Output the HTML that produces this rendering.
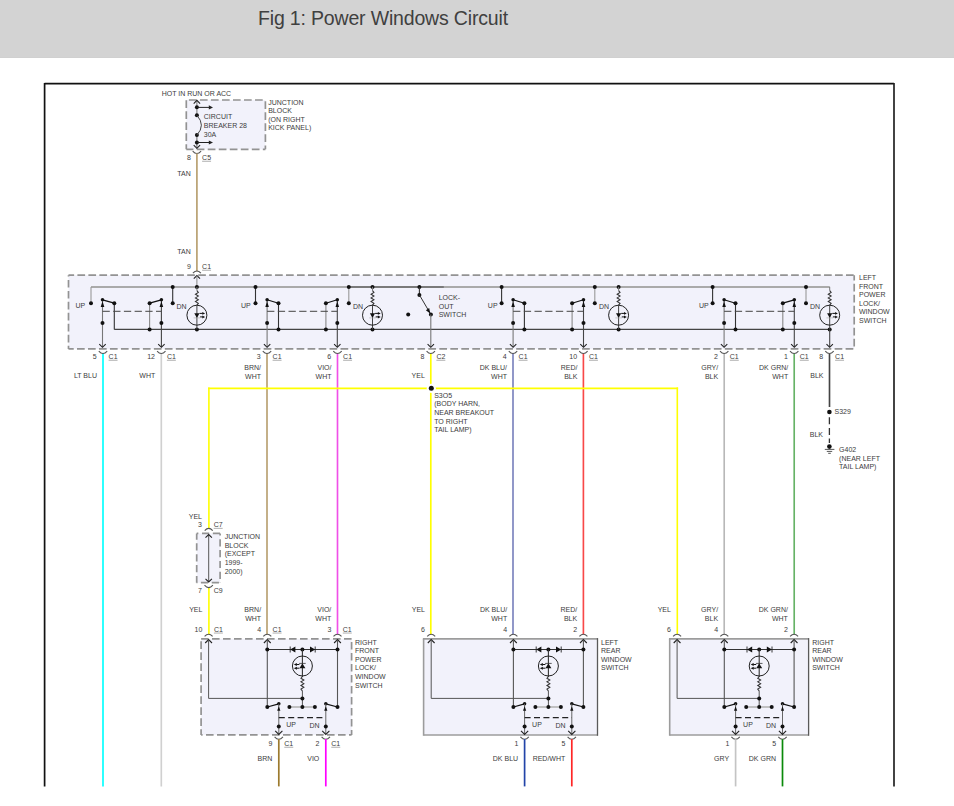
<!DOCTYPE html>
<html><head><meta charset="utf-8"><title>Fig 1: Power Windows Circuit</title>
<style>
html,body{margin:0;padding:0;background:#fff;width:954px;height:806px;overflow:hidden;}
.hdr{position:absolute;left:0;top:0;width:954px;height:57px;background:#d3d3d3;border-bottom:1px solid #d0d0d0;}
.ttl{position:absolute;left:258px;top:7px;font-family:"Liberation Sans",sans-serif;font-size:19.5px;letter-spacing:-0.17px;color:#404040;white-space:nowrap;}
svg{position:absolute;left:0;top:0;}
svg text{font-family:"Liberation Sans",sans-serif;}
</style></head><body>
<div class="hdr"></div>
<div class="ttl">Fig 1: Power Windows Circuit</div>
<svg width="954" height="806" viewBox="0 0 954 806">

<line x1="44.60" y1="83.70" x2="894.00" y2="83.70" stroke="#111" stroke-width="1.7" stroke-linecap="butt"/>
<line x1="44.60" y1="82.90" x2="44.60" y2="786.40" stroke="#111" stroke-width="1.7" stroke-linecap="butt"/>
<line x1="894.00" y1="82.90" x2="894.00" y2="786.40" stroke="#222" stroke-width="1.7" stroke-linecap="butt"/>
<rect x="186.30" y="100.00" width="79.10" height="49.30" fill="#f2f2fb"/>
<line x1="186.30" y1="100.00" x2="265.40" y2="100.00" stroke="#939393" stroke-width="1.7" stroke-dasharray="7.7 3.320" stroke-dashoffset="8.420"/>
<line x1="265.40" y1="100.00" x2="265.40" y2="149.30" stroke="#939393" stroke-width="1.7" stroke-dasharray="7.7 3.320" stroke-dashoffset="9.720"/>
<line x1="186.30" y1="149.30" x2="265.40" y2="149.30" stroke="#939393" stroke-width="1.7" stroke-dasharray="7.7 3.320" stroke-dashoffset="0.600"/>
<line x1="186.30" y1="100.00" x2="186.30" y2="149.30" stroke="#939393" stroke-width="1.7" stroke-dasharray="7.7 3.320" stroke-dashoffset="10.820"/>
<text x="161.70" y="95.95" text-anchor="start" font-size="7" fill="#3c3c3c">HOT IN RUN OR ACC</text>
<text x="203.80" y="119.15" text-anchor="start" font-size="7" fill="#3c3c3c">CIRCUIT</text>
<text x="203.80" y="127.85" text-anchor="start" font-size="7" fill="#3c3c3c">BREAKER 28</text>
<text x="203.80" y="136.55" text-anchor="start" font-size="7" fill="#3c3c3c">30A</text>
<text x="268.20" y="105.15" text-anchor="start" font-size="7" fill="#3c3c3c">JUNCTION</text>
<text x="268.20" y="113.25" text-anchor="start" font-size="7" fill="#3c3c3c">BLOCK</text>
<text x="268.20" y="122.25" text-anchor="start" font-size="7" fill="#3c3c3c">(ON RIGHT</text>
<text x="268.20" y="130.15" text-anchor="start" font-size="7" fill="#3c3c3c">KICK PANEL)</text>
<line x1="196.90" y1="100.60" x2="196.90" y2="115.30" stroke="#777" stroke-width="1.0" stroke-linecap="butt"/>
<line x1="196.90" y1="135.10" x2="196.90" y2="148.50" stroke="#666" stroke-width="1.0" stroke-linecap="butt"/>
<polyline points="193.70,103.60 196.90,100.40 200.10,103.60" stroke="#222" stroke-width="1.1" fill="none"/>
<polyline points="193.70,145.10 196.90,148.30 200.10,145.10" stroke="#222" stroke-width="1.1" fill="none"/>
<circle cx="196.90" cy="107.20" r="2.0" fill="#111"/>
<line x1="196.90" y1="107.40" x2="209.30" y2="107.40" stroke="#222" stroke-width="1.0" stroke-linecap="butt"/>
<polygon points="213.00,107.40 208.80,105.30 208.80,109.50" fill="#222"/>
<circle cx="196.90" cy="115.30" r="2.0" fill="#111"/>
<circle cx="196.90" cy="135.10" r="2.0" fill="#111"/>
<path d="M196.9,115.3 Q205.9,125.2 196.9,135.1" stroke="#444" stroke-width="1" fill="none"/>
<circle cx="196.90" cy="142.40" r="2.0" fill="#111"/>
<line x1="196.90" y1="142.50" x2="209.30" y2="142.50" stroke="#222" stroke-width="1.0" stroke-linecap="butt"/>
<polygon points="213.00,142.50 208.80,140.40 208.80,144.60" fill="#222"/>
<path d="M192.70,151.10 Q196.90,155.90 201.10,151.10" stroke="#555" stroke-width="1.1" fill="none"/>
<text x="190.80" y="160.05" text-anchor="end" font-size="7" fill="#3c3c3c">8</text>
<text x="202.10" y="160.05" text-anchor="start" font-size="7" fill="#3c3c3c">C5</text>
<line x1="202.10" y1="161.25" x2="211.05" y2="161.25" stroke="#777" stroke-width="0.6" stroke-linecap="butt"/>
<line x1="196.90" y1="153.50" x2="196.90" y2="271.30" stroke="#b9a172" stroke-width="1.7" stroke-linecap="butt"/>
<text x="190.80" y="176.25" text-anchor="end" font-size="7" fill="#3c3c3c">TAN</text>
<text x="190.80" y="254.15" text-anchor="end" font-size="7" fill="#3c3c3c">TAN</text>
<text x="190.80" y="269.05" text-anchor="end" font-size="7" fill="#3c3c3c">9</text>
<text x="202.10" y="269.05" text-anchor="start" font-size="7" fill="#3c3c3c">C1</text>
<line x1="202.10" y1="270.25" x2="211.05" y2="270.25" stroke="#777" stroke-width="0.6" stroke-linecap="butt"/>
<rect x="68.50" y="275.20" width="785.70" height="73.70" fill="#f2f2fb"/>
<line x1="68.50" y1="275.20" x2="854.20" y2="275.20" stroke="#939393" stroke-width="1.7" stroke-dasharray="7.7 3.280" stroke-dashoffset="2.080"/>
<line x1="854.20" y1="275.20" x2="854.20" y2="348.90" stroke="#939393" stroke-width="1.7" stroke-dasharray="7.7 3.280" stroke-dashoffset="2.380"/>
<line x1="68.50" y1="348.90" x2="854.20" y2="348.90" stroke="#939393" stroke-width="1.7" stroke-dasharray="7.7 3.280" stroke-dashoffset="2.480"/>
<line x1="68.50" y1="275.20" x2="68.50" y2="348.90" stroke="#939393" stroke-width="1.7" stroke-dasharray="7.7 3.280" stroke-dashoffset="6.280"/>
<path d="M192.90,273.20 Q196.90,268.80 200.90,273.20" stroke="#555" stroke-width="1.1" fill="none"/>
<polyline points="193.80,278.70 196.90,275.60 200.00,278.70" stroke="#222" stroke-width="1.1" fill="none"/>
<line x1="196.90" y1="275.80" x2="196.90" y2="286.90" stroke="#888" stroke-width="1" stroke-linecap="butt"/>
<line x1="91.00" y1="286.90" x2="829.70" y2="286.90" stroke="#aaa" stroke-width="2" stroke-linecap="butt"/>
<line x1="348.80" y1="286.90" x2="443.80" y2="286.90" stroke="#7a7a7a" stroke-width="2" stroke-linecap="butt"/>
<line x1="114.30" y1="329.40" x2="829.70" y2="329.40" stroke="#444" stroke-width="1.2" stroke-linecap="butt"/>
<line x1="91.00" y1="286.90" x2="91.00" y2="303.20" stroke="#999" stroke-width="1.1" stroke-linecap="butt"/>
<circle cx="91.00" cy="303.20" r="2.0" fill="#111"/>
<line x1="172.70" y1="286.90" x2="172.70" y2="303.20" stroke="#333" stroke-width="1.1" stroke-linecap="butt"/>
<circle cx="172.70" cy="286.90" r="2.0" fill="#111"/>
<circle cx="172.70" cy="303.20" r="2.0" fill="#111"/>
<line x1="102.50" y1="299.80" x2="114.30" y2="303.20" stroke="#111" stroke-width="1.2" stroke-linecap="butt"/>
<line x1="114.30" y1="303.20" x2="114.30" y2="329.40" stroke="#333" stroke-width="1.1" stroke-linecap="butt"/>
<line x1="102.50" y1="299.80" x2="102.50" y2="347.00" stroke="#777" stroke-width="1.1" stroke-linecap="butt"/>
<polygon points="102.50,301.30 100.70,306.90 104.30,306.90" fill="#111"/>
<circle cx="102.50" cy="299.80" r="1.75" fill="#111"/>
<circle cx="114.30" cy="303.20" r="2.0" fill="#111"/>
<circle cx="102.50" cy="322.90" r="2.0" fill="#111"/>
<line x1="161.40" y1="299.80" x2="149.60" y2="303.20" stroke="#111" stroke-width="1.2" stroke-linecap="butt"/>
<line x1="149.60" y1="303.20" x2="149.60" y2="329.40" stroke="#888" stroke-width="1.1" stroke-linecap="butt"/>
<line x1="161.40" y1="299.80" x2="161.40" y2="347.00" stroke="#444" stroke-width="1.1" stroke-linecap="butt"/>
<polygon points="161.40,301.30 159.60,306.90 163.20,306.90" fill="#111"/>
<circle cx="161.40" cy="299.80" r="1.75" fill="#111"/>
<circle cx="149.60" cy="303.20" r="2.0" fill="#111"/>
<circle cx="161.40" cy="322.90" r="2.0" fill="#111"/>
<circle cx="149.60" cy="329.40" r="2.0" fill="#111"/>
<line x1="102.50" y1="311.30" x2="161.40" y2="311.30" stroke="#444" stroke-width="1.0" stroke-linecap="butt" stroke-dasharray="7.3 3.4"/>
<polyline points="99.30,344.10 102.50,347.30 105.70,344.10" stroke="#222" stroke-width="1.1" fill="none"/>
<polyline points="158.20,344.10 161.40,347.30 164.60,344.10" stroke="#222" stroke-width="1.1" fill="none"/>
<line x1="255.50" y1="286.90" x2="255.50" y2="303.20" stroke="#333" stroke-width="1.1" stroke-linecap="butt"/>
<circle cx="255.50" cy="286.90" r="2.0" fill="#111"/>
<circle cx="255.50" cy="303.20" r="2.0" fill="#111"/>
<line x1="348.80" y1="286.90" x2="348.80" y2="303.20" stroke="#999" stroke-width="1.1" stroke-linecap="butt"/>
<circle cx="348.80" cy="286.90" r="2.0" fill="#111"/>
<circle cx="348.80" cy="303.20" r="2.0" fill="#111"/>
<line x1="267.10" y1="299.80" x2="278.50" y2="303.20" stroke="#111" stroke-width="1.2" stroke-linecap="butt"/>
<line x1="278.50" y1="303.20" x2="278.50" y2="329.40" stroke="#333" stroke-width="1.1" stroke-linecap="butt"/>
<line x1="267.10" y1="299.80" x2="267.10" y2="347.00" stroke="#777" stroke-width="1.1" stroke-linecap="butt"/>
<polygon points="267.10,301.30 265.30,306.90 268.90,306.90" fill="#111"/>
<circle cx="267.10" cy="299.80" r="1.75" fill="#111"/>
<circle cx="278.50" cy="303.20" r="2.0" fill="#111"/>
<circle cx="267.10" cy="322.90" r="2.0" fill="#111"/>
<circle cx="278.50" cy="329.40" r="2.0" fill="#111"/>
<line x1="337.30" y1="299.80" x2="325.90" y2="303.20" stroke="#111" stroke-width="1.2" stroke-linecap="butt"/>
<line x1="325.90" y1="303.20" x2="325.90" y2="329.40" stroke="#888" stroke-width="1.1" stroke-linecap="butt"/>
<line x1="337.30" y1="299.80" x2="337.30" y2="347.00" stroke="#444" stroke-width="1.1" stroke-linecap="butt"/>
<polygon points="337.30,301.30 335.50,306.90 339.10,306.90" fill="#111"/>
<circle cx="337.30" cy="299.80" r="1.75" fill="#111"/>
<circle cx="325.90" cy="303.20" r="2.0" fill="#111"/>
<circle cx="337.30" cy="322.90" r="2.0" fill="#111"/>
<circle cx="325.90" cy="329.40" r="2.0" fill="#111"/>
<line x1="267.10" y1="311.30" x2="337.30" y2="311.30" stroke="#444" stroke-width="1.0" stroke-linecap="butt" stroke-dasharray="7.3 3.4"/>
<polyline points="263.90,344.10 267.10,347.30 270.30,344.10" stroke="#222" stroke-width="1.1" fill="none"/>
<polyline points="334.10,344.10 337.30,347.30 340.50,344.10" stroke="#222" stroke-width="1.1" fill="none"/>
<line x1="501.60" y1="286.90" x2="501.60" y2="303.20" stroke="#333" stroke-width="1.1" stroke-linecap="butt"/>
<circle cx="501.60" cy="286.90" r="2.0" fill="#111"/>
<circle cx="501.60" cy="303.20" r="2.0" fill="#111"/>
<line x1="594.80" y1="286.90" x2="594.80" y2="303.20" stroke="#999" stroke-width="1.1" stroke-linecap="butt"/>
<circle cx="594.80" cy="286.90" r="2.0" fill="#111"/>
<circle cx="594.80" cy="303.20" r="2.0" fill="#111"/>
<line x1="513.10" y1="299.80" x2="524.40" y2="303.20" stroke="#111" stroke-width="1.2" stroke-linecap="butt"/>
<line x1="524.40" y1="303.20" x2="524.40" y2="329.40" stroke="#333" stroke-width="1.1" stroke-linecap="butt"/>
<line x1="513.10" y1="299.80" x2="513.10" y2="347.00" stroke="#777" stroke-width="1.1" stroke-linecap="butt"/>
<polygon points="513.10,301.30 511.30,306.90 514.90,306.90" fill="#111"/>
<circle cx="513.10" cy="299.80" r="1.75" fill="#111"/>
<circle cx="524.40" cy="303.20" r="2.0" fill="#111"/>
<circle cx="513.10" cy="322.90" r="2.0" fill="#111"/>
<circle cx="524.40" cy="329.40" r="2.0" fill="#111"/>
<line x1="583.50" y1="299.80" x2="572.10" y2="303.20" stroke="#111" stroke-width="1.2" stroke-linecap="butt"/>
<line x1="572.10" y1="303.20" x2="572.10" y2="329.40" stroke="#888" stroke-width="1.1" stroke-linecap="butt"/>
<line x1="583.50" y1="299.80" x2="583.50" y2="347.00" stroke="#444" stroke-width="1.1" stroke-linecap="butt"/>
<polygon points="583.50,301.30 581.70,306.90 585.30,306.90" fill="#111"/>
<circle cx="583.50" cy="299.80" r="1.75" fill="#111"/>
<circle cx="572.10" cy="303.20" r="2.0" fill="#111"/>
<circle cx="583.50" cy="322.90" r="2.0" fill="#111"/>
<circle cx="572.10" cy="329.40" r="2.0" fill="#111"/>
<line x1="513.10" y1="311.30" x2="583.50" y2="311.30" stroke="#444" stroke-width="1.0" stroke-linecap="butt" stroke-dasharray="7.3 3.4"/>
<polyline points="509.90,344.10 513.10,347.30 516.30,344.10" stroke="#222" stroke-width="1.1" fill="none"/>
<polyline points="580.30,344.10 583.50,347.30 586.70,344.10" stroke="#222" stroke-width="1.1" fill="none"/>
<line x1="712.60" y1="286.90" x2="712.60" y2="303.20" stroke="#333" stroke-width="1.1" stroke-linecap="butt"/>
<circle cx="712.60" cy="286.90" r="2.0" fill="#111"/>
<circle cx="712.60" cy="303.20" r="2.0" fill="#111"/>
<line x1="806.00" y1="286.90" x2="806.00" y2="303.20" stroke="#999" stroke-width="1.1" stroke-linecap="butt"/>
<circle cx="806.00" cy="286.90" r="2.0" fill="#111"/>
<circle cx="806.00" cy="303.20" r="2.0" fill="#111"/>
<line x1="724.10" y1="299.80" x2="735.50" y2="303.20" stroke="#111" stroke-width="1.2" stroke-linecap="butt"/>
<line x1="735.50" y1="303.20" x2="735.50" y2="329.40" stroke="#333" stroke-width="1.1" stroke-linecap="butt"/>
<line x1="724.10" y1="299.80" x2="724.10" y2="347.00" stroke="#777" stroke-width="1.1" stroke-linecap="butt"/>
<polygon points="724.10,301.30 722.30,306.90 725.90,306.90" fill="#111"/>
<circle cx="724.10" cy="299.80" r="1.75" fill="#111"/>
<circle cx="735.50" cy="303.20" r="2.0" fill="#111"/>
<circle cx="724.10" cy="322.90" r="2.0" fill="#111"/>
<circle cx="735.50" cy="329.40" r="2.0" fill="#111"/>
<line x1="794.30" y1="299.80" x2="782.80" y2="303.20" stroke="#111" stroke-width="1.2" stroke-linecap="butt"/>
<line x1="782.80" y1="303.20" x2="782.80" y2="329.40" stroke="#888" stroke-width="1.1" stroke-linecap="butt"/>
<line x1="794.30" y1="299.80" x2="794.30" y2="347.00" stroke="#444" stroke-width="1.1" stroke-linecap="butt"/>
<polygon points="794.30,301.30 792.50,306.90 796.10,306.90" fill="#111"/>
<circle cx="794.30" cy="299.80" r="1.75" fill="#111"/>
<circle cx="782.80" cy="303.20" r="2.0" fill="#111"/>
<circle cx="794.30" cy="322.90" r="2.0" fill="#111"/>
<circle cx="782.80" cy="329.40" r="2.0" fill="#111"/>
<line x1="724.10" y1="311.30" x2="794.30" y2="311.30" stroke="#444" stroke-width="1.0" stroke-linecap="butt" stroke-dasharray="7.3 3.4"/>
<polyline points="720.90,344.10 724.10,347.30 727.30,344.10" stroke="#222" stroke-width="1.1" fill="none"/>
<polyline points="791.10,344.10 794.30,347.30 797.50,344.10" stroke="#222" stroke-width="1.1" fill="none"/>
<circle cx="196.90" cy="286.90" r="2.0" fill="#111"/>
<circle cx="196.90" cy="329.40" r="2.0" fill="#111"/>
<line x1="196.90" y1="286.90" x2="196.90" y2="290.60" stroke="#777" stroke-width="1" stroke-linecap="butt"/>
<polyline points="196.90,290.60 198.35,292.43 195.45,294.25 198.35,296.07 195.45,297.90 198.35,299.73 195.45,301.55 198.35,303.38 196.90,305.20" stroke="#333" stroke-width="1.05" fill="none"/>
<line x1="196.90" y1="305.20" x2="196.90" y2="329.40" stroke="#444" stroke-width="1.0" stroke-linecap="butt"/>
<circle cx="196.90" cy="315.20" r="10" stroke="#222" stroke-width="1" fill="none"/>
<polygon points="194.30,313.30 199.50,313.30 196.90,318.00" fill="#111"/>
<line x1="193.60" y1="317.90" x2="200.20" y2="317.90" stroke="#aaa" stroke-width="0.6" stroke-linecap="butt"/>
<line x1="199.50" y1="313.40" x2="202.80" y2="313.40" stroke="#111" stroke-width="1.0" stroke-linecap="butt"/>
<polygon points="205.10,313.40 202.30,312.10 202.30,314.70" fill="#111"/>
<line x1="200.10" y1="316.90" x2="202.80" y2="316.90" stroke="#111" stroke-width="1.0" stroke-linecap="butt"/>
<polygon points="205.10,316.90 202.30,315.40 202.30,318.40" fill="#111"/>
<circle cx="372.50" cy="286.90" r="2.0" fill="#111"/>
<circle cx="372.50" cy="329.40" r="2.0" fill="#111"/>
<line x1="372.50" y1="286.90" x2="372.50" y2="290.60" stroke="#777" stroke-width="1" stroke-linecap="butt"/>
<polyline points="372.50,290.60 373.95,292.43 371.05,294.25 373.95,296.07 371.05,297.90 373.95,299.73 371.05,301.55 373.95,303.38 372.50,305.20" stroke="#333" stroke-width="1.05" fill="none"/>
<line x1="372.50" y1="305.20" x2="372.50" y2="329.40" stroke="#444" stroke-width="1.0" stroke-linecap="butt"/>
<circle cx="372.50" cy="315.20" r="10" stroke="#222" stroke-width="1" fill="none"/>
<polygon points="369.90,313.30 375.10,313.30 372.50,318.00" fill="#111"/>
<line x1="369.20" y1="317.90" x2="375.80" y2="317.90" stroke="#aaa" stroke-width="0.6" stroke-linecap="butt"/>
<line x1="375.10" y1="313.40" x2="378.40" y2="313.40" stroke="#111" stroke-width="1.0" stroke-linecap="butt"/>
<polygon points="380.70,313.40 377.90,312.10 377.90,314.70" fill="#111"/>
<line x1="375.70" y1="316.90" x2="378.40" y2="316.90" stroke="#111" stroke-width="1.0" stroke-linecap="butt"/>
<polygon points="380.70,316.90 377.90,315.40 377.90,318.40" fill="#111"/>
<circle cx="618.60" cy="286.90" r="2.0" fill="#111"/>
<circle cx="618.60" cy="329.40" r="2.0" fill="#111"/>
<line x1="618.60" y1="286.90" x2="618.60" y2="290.60" stroke="#777" stroke-width="1" stroke-linecap="butt"/>
<polyline points="618.60,290.60 620.05,292.43 617.15,294.25 620.05,296.07 617.15,297.90 620.05,299.73 617.15,301.55 620.05,303.38 618.60,305.20" stroke="#333" stroke-width="1.05" fill="none"/>
<line x1="618.60" y1="305.20" x2="618.60" y2="329.40" stroke="#444" stroke-width="1.0" stroke-linecap="butt"/>
<circle cx="618.60" cy="315.20" r="10" stroke="#222" stroke-width="1" fill="none"/>
<polygon points="616.00,313.30 621.20,313.30 618.60,318.00" fill="#111"/>
<line x1="615.30" y1="317.90" x2="621.90" y2="317.90" stroke="#aaa" stroke-width="0.6" stroke-linecap="butt"/>
<line x1="621.20" y1="313.40" x2="624.50" y2="313.40" stroke="#111" stroke-width="1.0" stroke-linecap="butt"/>
<polygon points="626.80,313.40 624.00,312.10 624.00,314.70" fill="#111"/>
<line x1="621.80" y1="316.90" x2="624.50" y2="316.90" stroke="#111" stroke-width="1.0" stroke-linecap="butt"/>
<polygon points="626.80,316.90 624.00,315.40 624.00,318.40" fill="#111"/>
<circle cx="829.70" cy="329.40" r="2.0" fill="#111"/>
<line x1="829.70" y1="286.90" x2="829.70" y2="290.60" stroke="#777" stroke-width="1" stroke-linecap="butt"/>
<polyline points="829.70,290.60 831.15,292.43 828.25,294.25 831.15,296.07 828.25,297.90 831.15,299.73 828.25,301.55 831.15,303.38 829.70,305.20" stroke="#333" stroke-width="1.05" fill="none"/>
<line x1="829.70" y1="305.20" x2="829.70" y2="329.40" stroke="#444" stroke-width="1.0" stroke-linecap="butt"/>
<circle cx="829.70" cy="315.20" r="10" stroke="#222" stroke-width="1" fill="none"/>
<polygon points="827.10,313.30 832.30,313.30 829.70,318.00" fill="#111"/>
<line x1="826.40" y1="317.90" x2="833.00" y2="317.90" stroke="#aaa" stroke-width="0.6" stroke-linecap="butt"/>
<line x1="832.30" y1="313.40" x2="835.60" y2="313.40" stroke="#111" stroke-width="1.0" stroke-linecap="butt"/>
<polygon points="837.90,313.40 835.10,312.10 835.10,314.70" fill="#111"/>
<line x1="832.90" y1="316.90" x2="835.60" y2="316.90" stroke="#111" stroke-width="1.0" stroke-linecap="butt"/>
<polygon points="837.90,316.90 835.10,315.40 835.10,318.40" fill="#111"/>
<line x1="829.70" y1="329.40" x2="829.70" y2="347.00" stroke="#444" stroke-width="1.1" stroke-linecap="butt"/>
<polyline points="826.50,344.10 829.70,347.30 832.90,344.10" stroke="#222" stroke-width="1.1" fill="none"/>
<text x="85.20" y="308.15" text-anchor="end" font-size="7" fill="#3c3c3c">UP</text>
<text x="176.50" y="309.05" text-anchor="start" font-size="7" fill="#3c3c3c">DN</text>
<text x="250.70" y="308.15" text-anchor="end" font-size="7" fill="#3c3c3c">UP</text>
<text x="353.00" y="309.05" text-anchor="start" font-size="7" fill="#3c3c3c">DN</text>
<text x="497.60" y="308.15" text-anchor="end" font-size="7" fill="#3c3c3c">UP</text>
<text x="599.00" y="309.05" text-anchor="start" font-size="7" fill="#3c3c3c">DN</text>
<text x="708.80" y="308.15" text-anchor="end" font-size="7" fill="#3c3c3c">UP</text>
<text x="810.00" y="309.05" text-anchor="start" font-size="7" fill="#3c3c3c">DN</text>
<circle cx="419.40" cy="286.90" r="2.0" fill="#111"/>
<line x1="419.40" y1="286.90" x2="419.40" y2="294.90" stroke="#333" stroke-width="1.1" stroke-linecap="butt"/>
<circle cx="419.40" cy="294.90" r="2.0" fill="#111"/>
<line x1="419.40" y1="294.90" x2="430.90" y2="314.50" stroke="#333" stroke-width="1.0" stroke-linecap="butt"/>
<polygon points="430.2,313.4 425.9,310.2 429.2,308.0" fill="#111"/>
<circle cx="430.90" cy="314.50" r="2.0" fill="#111"/>
<circle cx="408.20" cy="314.50" r="2.0" fill="#111"/>
<line x1="430.80" y1="314.60" x2="430.80" y2="347.00" stroke="#777" stroke-width="1.1" stroke-linecap="butt"/>
<polyline points="427.60,344.10 430.80,347.30 434.00,344.10" stroke="#222" stroke-width="1.1" fill="none"/>
<text x="438.70" y="300.35" text-anchor="start" font-size="7" fill="#3c3c3c">LOCK-</text>
<text x="438.70" y="308.85" text-anchor="start" font-size="7" fill="#3c3c3c">OUT</text>
<text x="438.70" y="317.35" text-anchor="start" font-size="7" fill="#3c3c3c">SWITCH</text>
<text x="859.00" y="279.95" text-anchor="start" font-size="7" fill="#3c3c3c">LEFT</text>
<text x="859.00" y="288.95" text-anchor="start" font-size="7" fill="#3c3c3c">FRONT</text>
<text x="859.00" y="296.95" text-anchor="start" font-size="7" fill="#3c3c3c">POWER</text>
<text x="859.00" y="305.75" text-anchor="start" font-size="7" fill="#3c3c3c">LOCK/</text>
<text x="859.00" y="314.05" text-anchor="start" font-size="7" fill="#3c3c3c">WINDOW</text>
<text x="859.00" y="322.75" text-anchor="start" font-size="7" fill="#3c3c3c">SWITCH</text>
<line x1="208.90" y1="387.40" x2="208.90" y2="528.60" stroke="#ffff00" stroke-width="1.6" stroke-linecap="butt"/>
<line x1="208.90" y1="587.50" x2="208.90" y2="634.40" stroke="#ffff00" stroke-width="1.6" stroke-linecap="butt"/>
<line x1="677.30" y1="387.40" x2="677.30" y2="634.40" stroke="#ffff00" stroke-width="1.6" stroke-linecap="butt"/>
<line x1="103.00" y1="353.30" x2="103.00" y2="786.40" stroke="#00ffff" stroke-width="1.65" stroke-linecap="butt"/>
<path d="M98.80,351.10 Q103.00,355.90 107.20,351.10" stroke="#555" stroke-width="1.1" fill="none"/>
<text x="96.70" y="359.05" text-anchor="end" font-size="7" fill="#3c3c3c">5</text>
<text x="108.60" y="359.05" text-anchor="start" font-size="7" fill="#3c3c3c">C1</text>
<line x1="108.60" y1="360.25" x2="117.55" y2="360.25" stroke="#777" stroke-width="0.6" stroke-linecap="butt"/>
<text x="97.00" y="377.95" text-anchor="end" font-size="7" fill="#3c3c3c">LT BLU</text>
<line x1="161.30" y1="353.30" x2="161.30" y2="786.40" stroke="#d0d0d0" stroke-width="1.65" stroke-linecap="butt"/>
<path d="M157.10,351.10 Q161.30,355.90 165.50,351.10" stroke="#555" stroke-width="1.1" fill="none"/>
<text x="155.00" y="359.05" text-anchor="end" font-size="7" fill="#3c3c3c">12</text>
<text x="166.90" y="359.05" text-anchor="start" font-size="7" fill="#3c3c3c">C1</text>
<line x1="166.90" y1="360.25" x2="175.85" y2="360.25" stroke="#777" stroke-width="0.6" stroke-linecap="butt"/>
<text x="155.30" y="377.95" text-anchor="end" font-size="7" fill="#3c3c3c">WHT</text>
<line x1="267.00" y1="353.30" x2="267.00" y2="634.40" stroke="#b8a070" stroke-width="1.65" stroke-linecap="butt"/>
<path d="M262.80,351.10 Q267.00,355.90 271.20,351.10" stroke="#555" stroke-width="1.1" fill="none"/>
<text x="260.70" y="359.05" text-anchor="end" font-size="7" fill="#3c3c3c">3</text>
<text x="272.60" y="359.05" text-anchor="start" font-size="7" fill="#3c3c3c">C1</text>
<line x1="272.60" y1="360.25" x2="281.55" y2="360.25" stroke="#777" stroke-width="0.6" stroke-linecap="butt"/>
<text x="261.00" y="370.15" text-anchor="end" font-size="7" fill="#3c3c3c">BRN/</text>
<text x="261.00" y="378.65" text-anchor="end" font-size="7" fill="#3c3c3c">WHT</text>
<line x1="337.50" y1="353.30" x2="337.50" y2="634.40" stroke="#f050e8" stroke-width="1.65" stroke-linecap="butt"/>
<path d="M333.30,351.10 Q337.50,355.90 341.70,351.10" stroke="#555" stroke-width="1.1" fill="none"/>
<text x="331.20" y="359.05" text-anchor="end" font-size="7" fill="#3c3c3c">6</text>
<text x="343.10" y="359.05" text-anchor="start" font-size="7" fill="#3c3c3c">C1</text>
<line x1="343.10" y1="360.25" x2="352.05" y2="360.25" stroke="#777" stroke-width="0.6" stroke-linecap="butt"/>
<text x="331.50" y="370.15" text-anchor="end" font-size="7" fill="#3c3c3c">VIO/</text>
<text x="331.50" y="378.65" text-anchor="end" font-size="7" fill="#3c3c3c">WHT</text>
<line x1="430.80" y1="353.30" x2="430.80" y2="634.40" stroke="#ffff00" stroke-width="1.65" stroke-linecap="butt"/>
<path d="M426.60,351.10 Q430.80,355.90 435.00,351.10" stroke="#555" stroke-width="1.1" fill="none"/>
<text x="424.50" y="359.05" text-anchor="end" font-size="7" fill="#3c3c3c">8</text>
<text x="436.40" y="359.05" text-anchor="start" font-size="7" fill="#3c3c3c">C2</text>
<line x1="436.40" y1="360.25" x2="445.35" y2="360.25" stroke="#777" stroke-width="0.6" stroke-linecap="butt"/>
<text x="424.80" y="377.95" text-anchor="end" font-size="7" fill="#3c3c3c">YEL</text>
<line x1="513.00" y1="353.30" x2="513.00" y2="634.40" stroke="#7a82bd" stroke-width="1.65" stroke-linecap="butt"/>
<path d="M508.80,351.10 Q513.00,355.90 517.20,351.10" stroke="#555" stroke-width="1.1" fill="none"/>
<text x="506.70" y="359.05" text-anchor="end" font-size="7" fill="#3c3c3c">4</text>
<text x="518.60" y="359.05" text-anchor="start" font-size="7" fill="#3c3c3c">C1</text>
<line x1="518.60" y1="360.25" x2="527.55" y2="360.25" stroke="#777" stroke-width="0.6" stroke-linecap="butt"/>
<text x="507.00" y="370.15" text-anchor="end" font-size="7" fill="#3c3c3c">DK BLU/</text>
<text x="507.00" y="378.65" text-anchor="end" font-size="7" fill="#3c3c3c">WHT</text>
<line x1="583.40" y1="353.30" x2="583.40" y2="634.40" stroke="#f84848" stroke-width="1.65" stroke-linecap="butt"/>
<path d="M579.20,351.10 Q583.40,355.90 587.60,351.10" stroke="#555" stroke-width="1.1" fill="none"/>
<text x="577.10" y="359.05" text-anchor="end" font-size="7" fill="#3c3c3c">10</text>
<text x="589.00" y="359.05" text-anchor="start" font-size="7" fill="#3c3c3c">C1</text>
<line x1="589.00" y1="360.25" x2="597.95" y2="360.25" stroke="#777" stroke-width="0.6" stroke-linecap="butt"/>
<text x="577.40" y="370.15" text-anchor="end" font-size="7" fill="#3c3c3c">RED/</text>
<text x="577.40" y="378.65" text-anchor="end" font-size="7" fill="#3c3c3c">BLK</text>
<line x1="724.20" y1="353.30" x2="724.20" y2="634.40" stroke="#b8b8b8" stroke-width="1.65" stroke-linecap="butt"/>
<path d="M720.00,351.10 Q724.20,355.90 728.40,351.10" stroke="#555" stroke-width="1.1" fill="none"/>
<text x="717.90" y="359.05" text-anchor="end" font-size="7" fill="#3c3c3c">2</text>
<text x="729.80" y="359.05" text-anchor="start" font-size="7" fill="#3c3c3c">C1</text>
<line x1="729.80" y1="360.25" x2="738.75" y2="360.25" stroke="#777" stroke-width="0.6" stroke-linecap="butt"/>
<text x="718.20" y="370.15" text-anchor="end" font-size="7" fill="#3c3c3c">GRY/</text>
<text x="718.20" y="378.65" text-anchor="end" font-size="7" fill="#3c3c3c">BLK</text>
<line x1="794.20" y1="353.30" x2="794.20" y2="634.40" stroke="#66b266" stroke-width="1.65" stroke-linecap="butt"/>
<path d="M790.00,351.10 Q794.20,355.90 798.40,351.10" stroke="#555" stroke-width="1.1" fill="none"/>
<text x="787.90" y="359.05" text-anchor="end" font-size="7" fill="#3c3c3c">1</text>
<text x="799.80" y="359.05" text-anchor="start" font-size="7" fill="#3c3c3c">C1</text>
<line x1="799.80" y1="360.25" x2="808.75" y2="360.25" stroke="#777" stroke-width="0.6" stroke-linecap="butt"/>
<text x="788.20" y="370.15" text-anchor="end" font-size="7" fill="#3c3c3c">DK GRN/</text>
<text x="788.20" y="378.65" text-anchor="end" font-size="7" fill="#3c3c3c">WHT</text>
<line x1="829.50" y1="353.30" x2="829.50" y2="407.00" stroke="#444" stroke-width="1.65" stroke-linecap="butt"/>
<path d="M825.30,351.10 Q829.50,355.90 833.70,351.10" stroke="#555" stroke-width="1.1" fill="none"/>
<text x="823.20" y="359.05" text-anchor="end" font-size="7" fill="#3c3c3c">8</text>
<text x="835.10" y="359.05" text-anchor="start" font-size="7" fill="#3c3c3c">C1</text>
<line x1="835.10" y1="360.25" x2="844.05" y2="360.25" stroke="#777" stroke-width="0.6" stroke-linecap="butt"/>
<text x="823.50" y="377.95" text-anchor="end" font-size="7" fill="#3c3c3c">BLK</text>
<line x1="208.10" y1="388.40" x2="678.10" y2="388.40" stroke="#ffff00" stroke-width="1.7" stroke-linecap="butt"/>
<circle cx="431.3" cy="388.3" r="4.6" fill="#fff"/>
<circle cx="431.30" cy="388.30" r="2.5" fill="#111"/>
<text x="434.20" y="397.85" text-anchor="start" font-size="7" fill="#3c3c3c">S3O5</text>
<text x="434.20" y="406.45" text-anchor="start" font-size="7" fill="#3c3c3c">(BODY HARN,</text>
<text x="434.20" y="415.05" text-anchor="start" font-size="7" fill="#3c3c3c">NEAR BREAKOUT</text>
<text x="434.20" y="423.65" text-anchor="start" font-size="7" fill="#3c3c3c">TO RIGHT</text>
<text x="434.20" y="432.25" text-anchor="start" font-size="7" fill="#3c3c3c">TAIL LAMP)</text>
<circle cx="829.40" cy="412.00" r="2.3" fill="#111"/>
<line x1="829.40" y1="417.30" x2="829.40" y2="443.00" stroke="#333" stroke-width="1.3" stroke-linecap="butt" stroke-dasharray="7 3.6"/>
<circle cx="829.40" cy="446.60" r="2.3" fill="#111"/>
<line x1="824.80" y1="449.40" x2="834.40" y2="449.40" stroke="#444" stroke-width="0.9" stroke-linecap="butt"/>
<line x1="826.80" y1="451.40" x2="832.20" y2="451.40" stroke="#444" stroke-width="0.9" stroke-linecap="butt"/>
<line x1="828.20" y1="453.30" x2="830.80" y2="453.30" stroke="#444" stroke-width="0.9" stroke-linecap="butt"/>
<text x="834.50" y="413.95" text-anchor="start" font-size="7" fill="#3c3c3c">S329</text>
<text x="823.00" y="436.85" text-anchor="end" font-size="7" fill="#3c3c3c">BLK</text>
<text x="839.10" y="452.05" text-anchor="start" font-size="7" fill="#3c3c3c">G402</text>
<text x="839.10" y="460.55" text-anchor="start" font-size="7" fill="#3c3c3c">(NEAR LEFT</text>
<text x="839.10" y="469.05" text-anchor="start" font-size="7" fill="#3c3c3c">TAIL LAMP)</text>
<rect x="196.70" y="533.40" width="23.40" height="49.30" fill="#f2f2fb"/>
<line x1="196.70" y1="533.40" x2="220.10" y2="533.40" stroke="#939393" stroke-width="1.7" stroke-dasharray="7.2 3.650" stroke-dashoffset="5.550"/>
<line x1="220.10" y1="533.40" x2="220.10" y2="582.70" stroke="#939393" stroke-width="1.7" stroke-dasharray="7.2 3.650" stroke-dashoffset="5.050"/>
<line x1="196.70" y1="582.70" x2="220.10" y2="582.70" stroke="#939393" stroke-width="1.7" stroke-dasharray="7.2 3.650" stroke-dashoffset="6.650"/>
<line x1="196.70" y1="533.40" x2="196.70" y2="582.70" stroke="#939393" stroke-width="1.7" stroke-dasharray="7.2 3.650" stroke-dashoffset="0.900"/>
<path d="M204.70,530.60 Q208.70,526.20 212.70,530.60" stroke="#555" stroke-width="1.1" fill="none"/>
<path d="M204.50,585.20 Q208.70,590.00 212.90,585.20" stroke="#555" stroke-width="1.1" fill="none"/>
<line x1="208.70" y1="534.50" x2="208.70" y2="582.00" stroke="#555" stroke-width="1" stroke-linecap="butt"/>
<polyline points="205.50,537.70 208.70,534.50 211.90,537.70" stroke="#222" stroke-width="1.1" fill="none"/>
<polyline points="205.50,578.80 208.70,582.00 211.90,578.80" stroke="#222" stroke-width="1.1" fill="none"/>
<text x="202.00" y="519.35" text-anchor="end" font-size="7" fill="#3c3c3c">YEL</text>
<text x="202.00" y="527.15" text-anchor="end" font-size="7" fill="#3c3c3c">3</text>
<text x="213.70" y="527.15" text-anchor="start" font-size="7" fill="#3c3c3c">C7</text>
<line x1="213.70" y1="528.35" x2="222.65" y2="528.35" stroke="#777" stroke-width="0.6" stroke-linecap="butt"/>
<text x="224.70" y="539.15" text-anchor="start" font-size="7" fill="#3c3c3c">JUNCTION</text>
<text x="224.70" y="547.75" text-anchor="start" font-size="7" fill="#3c3c3c">BLOCK</text>
<text x="224.70" y="556.35" text-anchor="start" font-size="7" fill="#3c3c3c">(EXCEPT</text>
<text x="224.70" y="564.95" text-anchor="start" font-size="7" fill="#3c3c3c">1999-</text>
<text x="224.70" y="573.55" text-anchor="start" font-size="7" fill="#3c3c3c">2000)</text>
<text x="202.00" y="592.95" text-anchor="end" font-size="7" fill="#3c3c3c">7</text>
<text x="213.70" y="592.95" text-anchor="start" font-size="7" fill="#3c3c3c">C9</text>
<rect x="201.10" y="638.80" width="150.50" height="96.10" fill="#f2f2fb"/>
<line x1="201.10" y1="638.80" x2="351.60" y2="638.80" stroke="#939393" stroke-width="1.7" stroke-dasharray="7.6 3.400" stroke-dashoffset="0.100"/>
<line x1="351.60" y1="638.80" x2="351.60" y2="734.90" stroke="#939393" stroke-width="1.7" stroke-dasharray="7.6 3.400" stroke-dashoffset="7.800"/>
<line x1="201.10" y1="734.90" x2="351.60" y2="734.90" stroke="#939393" stroke-width="1.7" stroke-dasharray="7.6 3.400" stroke-dashoffset="6.100"/>
<line x1="201.10" y1="638.80" x2="201.10" y2="734.90" stroke="#939393" stroke-width="1.7" stroke-dasharray="7.6 3.400" stroke-dashoffset="8.500"/>
<path d="M204.60,636.40 Q208.60,632.00 212.60,636.40" stroke="#555" stroke-width="1.1" fill="none"/>
<polyline points="205.20,643.00 208.60,639.60 212.00,643.00" stroke="#222" stroke-width="1.1" fill="none"/>
<text x="202.40" y="612.25" text-anchor="end" font-size="7" fill="#3c3c3c">YEL</text>
<text x="202.40" y="631.85" text-anchor="end" font-size="7" fill="#3c3c3c">10</text>
<text x="213.90" y="631.85" text-anchor="start" font-size="7" fill="#3c3c3c">C1</text>
<line x1="213.90" y1="633.05" x2="222.85" y2="633.05" stroke="#777" stroke-width="0.6" stroke-linecap="butt"/>
<path d="M263.30,636.40 Q267.30,632.00 271.30,636.40" stroke="#555" stroke-width="1.1" fill="none"/>
<polyline points="263.90,643.00 267.30,639.60 270.70,643.00" stroke="#222" stroke-width="1.1" fill="none"/>
<text x="261.10" y="612.25" text-anchor="end" font-size="7" fill="#3c3c3c">BRN/</text>
<text x="261.10" y="621.05" text-anchor="end" font-size="7" fill="#3c3c3c">WHT</text>
<text x="261.10" y="631.85" text-anchor="end" font-size="7" fill="#3c3c3c">4</text>
<text x="272.60" y="631.85" text-anchor="start" font-size="7" fill="#3c3c3c">C1</text>
<line x1="272.60" y1="633.05" x2="281.55" y2="633.05" stroke="#777" stroke-width="0.6" stroke-linecap="butt"/>
<path d="M333.50,636.40 Q337.50,632.00 341.50,636.40" stroke="#555" stroke-width="1.1" fill="none"/>
<polyline points="334.10,643.00 337.50,639.60 340.90,643.00" stroke="#222" stroke-width="1.1" fill="none"/>
<text x="331.30" y="612.25" text-anchor="end" font-size="7" fill="#3c3c3c">VIO/</text>
<text x="331.30" y="621.05" text-anchor="end" font-size="7" fill="#3c3c3c">WHT</text>
<text x="331.30" y="631.85" text-anchor="end" font-size="7" fill="#3c3c3c">3</text>
<text x="342.80" y="631.85" text-anchor="start" font-size="7" fill="#3c3c3c">C1</text>
<line x1="342.80" y1="633.05" x2="351.75" y2="633.05" stroke="#777" stroke-width="0.6" stroke-linecap="butt"/>
<line x1="208.60" y1="639.80" x2="208.60" y2="698.40" stroke="#555" stroke-width="1.0" stroke-linecap="butt"/>
<line x1="208.60" y1="698.40" x2="302.40" y2="698.40" stroke="#555" stroke-width="1.0" stroke-linecap="butt"/>
<line x1="267.30" y1="639.80" x2="267.30" y2="707.00" stroke="#555" stroke-width="1.1" stroke-linecap="butt"/>
<line x1="337.50" y1="639.80" x2="337.50" y2="707.00" stroke="#555" stroke-width="1.1" stroke-linecap="butt"/>
<line x1="267.30" y1="649.50" x2="337.50" y2="649.50" stroke="#333" stroke-width="1.1" stroke-linecap="butt"/>
<circle cx="267.30" cy="649.50" r="2.0" fill="#111"/>
<circle cx="337.50" cy="649.50" r="2.0" fill="#111"/>
<circle cx="302.40" cy="649.50" r="2.0" fill="#111"/>
<polygon points="290.20,649.50 295.40,646.50 295.40,652.50" fill="#111"/>
<line x1="290.20" y1="646.50" x2="290.20" y2="652.50" stroke="#222" stroke-width="0.9" stroke-linecap="butt"/>
<polygon points="315.20,649.50 310.00,646.50 310.00,652.50" fill="#111"/>
<line x1="315.20" y1="646.50" x2="315.20" y2="652.50" stroke="#222" stroke-width="0.9" stroke-linecap="butt"/>
<line x1="302.40" y1="649.50" x2="302.40" y2="677.00" stroke="#333" stroke-width="1.1" stroke-linecap="butt"/>
<circle cx="302.40" cy="666.00" r="10" stroke="#222" stroke-width="1" fill="none"/>
<polygon points="299.40,668.20 305.40,668.20 302.40,663.40" fill="#111"/>
<line x1="299.10" y1="663.40" x2="305.70" y2="663.40" stroke="#333" stroke-width="0.8" stroke-linecap="butt"/>
<line x1="299.40" y1="664.50" x2="296.40" y2="664.50" stroke="#111" stroke-width="1.0" stroke-linecap="butt"/>
<polygon points="293.90,664.50 296.90,663.00 296.90,666.00" fill="#111"/>
<line x1="299.40" y1="668.20" x2="296.40" y2="668.20" stroke="#111" stroke-width="1.0" stroke-linecap="butt"/>
<polygon points="293.90,668.20 296.90,666.70 296.90,669.70" fill="#111"/>
<polyline points="302.40,676.50 300.95,678.29 303.85,680.08 300.95,681.86 303.85,683.65 300.95,685.44 303.85,687.22 300.95,689.01 302.40,690.80" stroke="#333" stroke-width="1.05" fill="none"/>
<line x1="302.40" y1="690.80" x2="302.40" y2="707.00" stroke="#555" stroke-width="1.0" stroke-linecap="butt"/>
<circle cx="302.40" cy="698.40" r="2.0" fill="#111"/>
<line x1="289.40" y1="707.00" x2="314.90" y2="707.00" stroke="#bbb" stroke-width="1.8" stroke-linecap="butt"/>
<circle cx="289.40" cy="707.00" r="2.0" fill="#111"/>
<circle cx="302.40" cy="707.00" r="2.0" fill="#111"/>
<circle cx="314.90" cy="707.00" r="2.0" fill="#111"/>
<line x1="267.30" y1="707.00" x2="278.80" y2="703.80" stroke="#111" stroke-width="1.2" stroke-linecap="butt"/>
<line x1="337.50" y1="707.00" x2="325.80" y2="703.80" stroke="#111" stroke-width="1.2" stroke-linecap="butt"/>
<circle cx="267.30" cy="707.00" r="2.0" fill="#111"/>
<circle cx="337.50" cy="707.00" r="2.0" fill="#111"/>
<circle cx="278.80" cy="703.70" r="1.75" fill="#111"/>
<circle cx="325.80" cy="703.70" r="1.75" fill="#111"/>
<line x1="278.80" y1="703.80" x2="278.80" y2="734.20" stroke="#666" stroke-width="1.0" stroke-linecap="butt"/>
<polygon points="278.80,706.20 277.20,710.70 280.40,710.70" fill="#111"/>
<circle cx="278.80" cy="726.40" r="2.0" fill="#111"/>
<polyline points="275.20,730.80 278.80,734.40 282.40,730.80" stroke="#222" stroke-width="1.1" fill="none"/>
<path d="M274.60,736.90 Q278.80,741.70 283.00,736.90" stroke="#555" stroke-width="1.1" fill="none"/>
<line x1="325.80" y1="703.80" x2="325.80" y2="734.20" stroke="#666" stroke-width="1.0" stroke-linecap="butt"/>
<polygon points="325.80,706.20 324.20,710.70 327.40,710.70" fill="#111"/>
<circle cx="325.80" cy="726.40" r="2.0" fill="#111"/>
<polyline points="322.20,730.80 325.80,734.40 329.40,730.80" stroke="#222" stroke-width="1.1" fill="none"/>
<path d="M321.60,736.90 Q325.80,741.70 330.00,736.90" stroke="#555" stroke-width="1.1" fill="none"/>
<line x1="278.80" y1="717.70" x2="325.80" y2="717.70" stroke="#222" stroke-width="1.2" stroke-linecap="butt" stroke-dasharray="6 3.4"/>
<text x="286.30" y="727.05" text-anchor="start" font-size="7" fill="#3c3c3c">UP</text>
<text x="319.50" y="728.05" text-anchor="end" font-size="7" fill="#3c3c3c">DN</text>
<line x1="278.80" y1="739.20" x2="278.80" y2="786.40" stroke="#9c7a2e" stroke-width="1.7" stroke-linecap="butt"/>
<text x="272.50" y="746.05" text-anchor="end" font-size="7" fill="#3c3c3c">9</text>
<text x="284.30" y="746.05" text-anchor="start" font-size="7" fill="#3c3c3c">C1</text>
<line x1="284.30" y1="747.25" x2="293.25" y2="747.25" stroke="#777" stroke-width="0.6" stroke-linecap="butt"/>
<text x="272.30" y="760.85" text-anchor="end" font-size="7" fill="#3c3c3c">BRN</text>
<line x1="325.80" y1="739.20" x2="325.80" y2="786.40" stroke="#ff00ff" stroke-width="1.7" stroke-linecap="butt"/>
<text x="319.50" y="746.05" text-anchor="end" font-size="7" fill="#3c3c3c">2</text>
<text x="331.30" y="746.05" text-anchor="start" font-size="7" fill="#3c3c3c">C1</text>
<line x1="331.30" y1="747.25" x2="340.25" y2="747.25" stroke="#777" stroke-width="0.6" stroke-linecap="butt"/>
<text x="319.30" y="760.85" text-anchor="end" font-size="7" fill="#3c3c3c">VIO</text>
<text x="355.00" y="644.95" text-anchor="start" font-size="7" fill="#3c3c3c">RIGHT</text>
<text x="355.00" y="653.15" text-anchor="start" font-size="7" fill="#3c3c3c">FRONT</text>
<text x="355.00" y="661.95" text-anchor="start" font-size="7" fill="#3c3c3c">POWER</text>
<text x="355.00" y="670.05" text-anchor="start" font-size="7" fill="#3c3c3c">LOCK/</text>
<text x="355.00" y="678.85" text-anchor="start" font-size="7" fill="#3c3c3c">WINDOW</text>
<text x="355.00" y="687.75" text-anchor="start" font-size="7" fill="#3c3c3c">SWITCH</text>
<rect x="423.60" y="638.90" width="173.90" height="96.10" fill="#f2f2fb"/>
<line x1="422.85" y1="638.90" x2="597.50" y2="638.90" stroke="#9c9c9c" stroke-width="1.6" stroke-linecap="butt"/>
<line x1="423.60" y1="638.90" x2="423.60" y2="735.75" stroke="#9c9c9c" stroke-width="1.6" stroke-linecap="butt"/>
<line x1="423.60" y1="735.00" x2="597.50" y2="735.00" stroke="#9c9c9c" stroke-width="1.6" stroke-linecap="butt"/>
<line x1="597.50" y1="638.10" x2="597.50" y2="735.80" stroke="#5a5a5a" stroke-width="1.3" stroke-linecap="butt"/>
<path d="M427.20,636.40 Q431.20,632.00 435.20,636.40" stroke="#555" stroke-width="1.1" fill="none"/>
<polyline points="427.80,643.00 431.20,639.60 434.60,643.00" stroke="#222" stroke-width="1.1" fill="none"/>
<text x="425.00" y="612.25" text-anchor="end" font-size="7" fill="#3c3c3c">YEL</text>
<text x="425.00" y="631.85" text-anchor="end" font-size="7" fill="#3c3c3c">6</text>
<path d="M509.40,636.40 Q513.40,632.00 517.40,636.40" stroke="#555" stroke-width="1.1" fill="none"/>
<polyline points="510.00,643.00 513.40,639.60 516.80,643.00" stroke="#222" stroke-width="1.1" fill="none"/>
<text x="507.20" y="612.25" text-anchor="end" font-size="7" fill="#3c3c3c">DK BLU/</text>
<text x="507.20" y="621.05" text-anchor="end" font-size="7" fill="#3c3c3c">WHT</text>
<text x="507.20" y="631.85" text-anchor="end" font-size="7" fill="#3c3c3c">4</text>
<path d="M579.40,636.40 Q583.40,632.00 587.40,636.40" stroke="#555" stroke-width="1.1" fill="none"/>
<polyline points="580.00,643.00 583.40,639.60 586.80,643.00" stroke="#222" stroke-width="1.1" fill="none"/>
<text x="577.20" y="612.25" text-anchor="end" font-size="7" fill="#3c3c3c">RED/</text>
<text x="577.20" y="621.05" text-anchor="end" font-size="7" fill="#3c3c3c">BLK</text>
<text x="577.20" y="631.85" text-anchor="end" font-size="7" fill="#3c3c3c">2</text>
<line x1="431.20" y1="639.80" x2="431.20" y2="698.40" stroke="#555" stroke-width="1.0" stroke-linecap="butt"/>
<line x1="431.20" y1="698.40" x2="548.40" y2="698.40" stroke="#555" stroke-width="1.0" stroke-linecap="butt"/>
<line x1="513.40" y1="639.80" x2="513.40" y2="707.00" stroke="#555" stroke-width="1.1" stroke-linecap="butt"/>
<line x1="583.40" y1="639.80" x2="583.40" y2="707.00" stroke="#555" stroke-width="1.1" stroke-linecap="butt"/>
<line x1="513.40" y1="649.50" x2="583.40" y2="649.50" stroke="#333" stroke-width="1.1" stroke-linecap="butt"/>
<circle cx="513.40" cy="649.50" r="2.0" fill="#111"/>
<circle cx="583.40" cy="649.50" r="2.0" fill="#111"/>
<circle cx="548.40" cy="649.50" r="2.0" fill="#111"/>
<polygon points="536.20,649.50 541.40,646.50 541.40,652.50" fill="#111"/>
<line x1="536.20" y1="646.50" x2="536.20" y2="652.50" stroke="#222" stroke-width="0.9" stroke-linecap="butt"/>
<polygon points="561.20,649.50 556.00,646.50 556.00,652.50" fill="#111"/>
<line x1="561.20" y1="646.50" x2="561.20" y2="652.50" stroke="#222" stroke-width="0.9" stroke-linecap="butt"/>
<line x1="548.40" y1="649.50" x2="548.40" y2="677.00" stroke="#333" stroke-width="1.1" stroke-linecap="butt"/>
<circle cx="548.40" cy="666.00" r="10" stroke="#222" stroke-width="1" fill="none"/>
<polygon points="545.40,668.20 551.40,668.20 548.40,663.40" fill="#111"/>
<line x1="545.10" y1="663.40" x2="551.70" y2="663.40" stroke="#333" stroke-width="0.8" stroke-linecap="butt"/>
<line x1="545.40" y1="664.50" x2="542.40" y2="664.50" stroke="#111" stroke-width="1.0" stroke-linecap="butt"/>
<polygon points="539.90,664.50 542.90,663.00 542.90,666.00" fill="#111"/>
<line x1="545.40" y1="668.20" x2="542.40" y2="668.20" stroke="#111" stroke-width="1.0" stroke-linecap="butt"/>
<polygon points="539.90,668.20 542.90,666.70 542.90,669.70" fill="#111"/>
<polyline points="548.40,676.50 546.95,678.29 549.85,680.08 546.95,681.86 549.85,683.65 546.95,685.44 549.85,687.22 546.95,689.01 548.40,690.80" stroke="#333" stroke-width="1.05" fill="none"/>
<line x1="548.40" y1="690.80" x2="548.40" y2="707.00" stroke="#555" stroke-width="1.0" stroke-linecap="butt"/>
<circle cx="548.40" cy="698.40" r="2.0" fill="#111"/>
<line x1="535.40" y1="707.00" x2="560.90" y2="707.00" stroke="#bbb" stroke-width="1.8" stroke-linecap="butt"/>
<circle cx="535.40" cy="707.00" r="2.0" fill="#111"/>
<circle cx="548.40" cy="707.00" r="2.0" fill="#111"/>
<circle cx="560.90" cy="707.00" r="2.0" fill="#111"/>
<line x1="513.40" y1="707.00" x2="524.60" y2="703.80" stroke="#111" stroke-width="1.2" stroke-linecap="butt"/>
<line x1="583.40" y1="707.00" x2="571.80" y2="703.80" stroke="#111" stroke-width="1.2" stroke-linecap="butt"/>
<circle cx="513.40" cy="707.00" r="2.0" fill="#111"/>
<circle cx="583.40" cy="707.00" r="2.0" fill="#111"/>
<circle cx="524.60" cy="703.70" r="1.75" fill="#111"/>
<circle cx="571.80" cy="703.70" r="1.75" fill="#111"/>
<line x1="524.60" y1="703.80" x2="524.60" y2="734.20" stroke="#666" stroke-width="1.0" stroke-linecap="butt"/>
<polygon points="524.60,706.20 523.00,710.70 526.20,710.70" fill="#111"/>
<circle cx="524.60" cy="726.40" r="2.0" fill="#111"/>
<polyline points="521.00,730.80 524.60,734.40 528.20,730.80" stroke="#222" stroke-width="1.1" fill="none"/>
<path d="M520.40,736.90 Q524.60,741.70 528.80,736.90" stroke="#555" stroke-width="1.1" fill="none"/>
<line x1="571.80" y1="703.80" x2="571.80" y2="734.20" stroke="#666" stroke-width="1.0" stroke-linecap="butt"/>
<polygon points="571.80,706.20 570.20,710.70 573.40,710.70" fill="#111"/>
<circle cx="571.80" cy="726.40" r="2.0" fill="#111"/>
<polyline points="568.20,730.80 571.80,734.40 575.40,730.80" stroke="#222" stroke-width="1.1" fill="none"/>
<path d="M567.60,736.90 Q571.80,741.70 576.00,736.90" stroke="#555" stroke-width="1.1" fill="none"/>
<line x1="524.60" y1="717.70" x2="571.80" y2="717.70" stroke="#222" stroke-width="1.2" stroke-linecap="butt" stroke-dasharray="6 3.4"/>
<text x="532.10" y="727.05" text-anchor="start" font-size="7" fill="#3c3c3c">UP</text>
<text x="565.50" y="728.05" text-anchor="end" font-size="7" fill="#3c3c3c">DN</text>
<line x1="524.60" y1="739.20" x2="524.60" y2="786.40" stroke="#2244a8" stroke-width="1.7" stroke-linecap="butt"/>
<text x="518.30" y="746.05" text-anchor="end" font-size="7" fill="#3c3c3c">1</text>
<text x="518.10" y="760.85" text-anchor="end" font-size="7" fill="#3c3c3c">DK BLU</text>
<line x1="571.80" y1="739.20" x2="571.80" y2="786.40" stroke="#ff2626" stroke-width="1.7" stroke-linecap="butt"/>
<text x="565.50" y="746.05" text-anchor="end" font-size="7" fill="#3c3c3c">5</text>
<text x="565.30" y="760.85" text-anchor="end" font-size="7" fill="#3c3c3c">RED/WHT</text>
<text x="601.00" y="644.95" text-anchor="start" font-size="7" fill="#3c3c3c">LEFT</text>
<text x="601.00" y="653.15" text-anchor="start" font-size="7" fill="#3c3c3c">REAR</text>
<text x="601.00" y="661.95" text-anchor="start" font-size="7" fill="#3c3c3c">WINDOW</text>
<text x="601.00" y="670.05" text-anchor="start" font-size="7" fill="#3c3c3c">SWITCH</text>
<rect x="669.70" y="638.90" width="138.90" height="96.10" fill="#f2f2fb"/>
<line x1="668.95" y1="638.90" x2="808.60" y2="638.90" stroke="#9c9c9c" stroke-width="1.6" stroke-linecap="butt"/>
<line x1="669.70" y1="638.90" x2="669.70" y2="735.75" stroke="#9c9c9c" stroke-width="1.6" stroke-linecap="butt"/>
<line x1="669.70" y1="735.00" x2="808.60" y2="735.00" stroke="#9c9c9c" stroke-width="1.6" stroke-linecap="butt"/>
<line x1="808.60" y1="638.10" x2="808.60" y2="735.80" stroke="#5a5a5a" stroke-width="1.3" stroke-linecap="butt"/>
<path d="M673.10,636.40 Q677.10,632.00 681.10,636.40" stroke="#555" stroke-width="1.1" fill="none"/>
<polyline points="673.70,643.00 677.10,639.60 680.50,643.00" stroke="#222" stroke-width="1.1" fill="none"/>
<text x="670.90" y="612.25" text-anchor="end" font-size="7" fill="#3c3c3c">YEL</text>
<text x="670.90" y="631.85" text-anchor="end" font-size="7" fill="#3c3c3c">6</text>
<path d="M720.30,636.40 Q724.30,632.00 728.30,636.40" stroke="#555" stroke-width="1.1" fill="none"/>
<polyline points="720.90,643.00 724.30,639.60 727.70,643.00" stroke="#222" stroke-width="1.1" fill="none"/>
<text x="718.10" y="612.25" text-anchor="end" font-size="7" fill="#3c3c3c">GRY/</text>
<text x="718.10" y="621.05" text-anchor="end" font-size="7" fill="#3c3c3c">BLK</text>
<text x="718.10" y="631.85" text-anchor="end" font-size="7" fill="#3c3c3c">4</text>
<path d="M790.10,636.40 Q794.10,632.00 798.10,636.40" stroke="#555" stroke-width="1.1" fill="none"/>
<polyline points="790.70,643.00 794.10,639.60 797.50,643.00" stroke="#222" stroke-width="1.1" fill="none"/>
<text x="787.90" y="612.25" text-anchor="end" font-size="7" fill="#3c3c3c">DK GRN/</text>
<text x="787.90" y="621.05" text-anchor="end" font-size="7" fill="#3c3c3c">WHT</text>
<text x="787.90" y="631.85" text-anchor="end" font-size="7" fill="#3c3c3c">2</text>
<line x1="677.10" y1="639.80" x2="677.10" y2="698.40" stroke="#555" stroke-width="1.0" stroke-linecap="butt"/>
<line x1="677.10" y1="698.40" x2="759.20" y2="698.40" stroke="#555" stroke-width="1.0" stroke-linecap="butt"/>
<line x1="724.30" y1="639.80" x2="724.30" y2="707.00" stroke="#555" stroke-width="1.1" stroke-linecap="butt"/>
<line x1="794.10" y1="639.80" x2="794.10" y2="707.00" stroke="#555" stroke-width="1.1" stroke-linecap="butt"/>
<line x1="724.30" y1="649.50" x2="794.10" y2="649.50" stroke="#333" stroke-width="1.1" stroke-linecap="butt"/>
<circle cx="724.30" cy="649.50" r="2.0" fill="#111"/>
<circle cx="794.10" cy="649.50" r="2.0" fill="#111"/>
<circle cx="759.20" cy="649.50" r="2.0" fill="#111"/>
<polygon points="747.00,649.50 752.20,646.50 752.20,652.50" fill="#111"/>
<line x1="747.00" y1="646.50" x2="747.00" y2="652.50" stroke="#222" stroke-width="0.9" stroke-linecap="butt"/>
<polygon points="772.00,649.50 766.80,646.50 766.80,652.50" fill="#111"/>
<line x1="772.00" y1="646.50" x2="772.00" y2="652.50" stroke="#222" stroke-width="0.9" stroke-linecap="butt"/>
<line x1="759.20" y1="649.50" x2="759.20" y2="677.00" stroke="#333" stroke-width="1.1" stroke-linecap="butt"/>
<circle cx="759.20" cy="666.00" r="10" stroke="#222" stroke-width="1" fill="none"/>
<polygon points="756.20,668.20 762.20,668.20 759.20,663.40" fill="#111"/>
<line x1="755.90" y1="663.40" x2="762.50" y2="663.40" stroke="#333" stroke-width="0.8" stroke-linecap="butt"/>
<line x1="756.20" y1="664.50" x2="753.20" y2="664.50" stroke="#111" stroke-width="1.0" stroke-linecap="butt"/>
<polygon points="750.70,664.50 753.70,663.00 753.70,666.00" fill="#111"/>
<line x1="756.20" y1="668.20" x2="753.20" y2="668.20" stroke="#111" stroke-width="1.0" stroke-linecap="butt"/>
<polygon points="750.70,668.20 753.70,666.70 753.70,669.70" fill="#111"/>
<polyline points="759.20,676.50 757.75,678.29 760.65,680.08 757.75,681.86 760.65,683.65 757.75,685.44 760.65,687.22 757.75,689.01 759.20,690.80" stroke="#333" stroke-width="1.05" fill="none"/>
<line x1="759.20" y1="690.80" x2="759.20" y2="707.00" stroke="#555" stroke-width="1.0" stroke-linecap="butt"/>
<circle cx="759.20" cy="698.40" r="2.0" fill="#111"/>
<line x1="746.20" y1="707.00" x2="771.70" y2="707.00" stroke="#bbb" stroke-width="1.8" stroke-linecap="butt"/>
<circle cx="746.20" cy="707.00" r="2.0" fill="#111"/>
<circle cx="759.20" cy="707.00" r="2.0" fill="#111"/>
<circle cx="771.70" cy="707.00" r="2.0" fill="#111"/>
<line x1="724.30" y1="707.00" x2="735.60" y2="703.80" stroke="#111" stroke-width="1.2" stroke-linecap="butt"/>
<line x1="794.10" y1="707.00" x2="782.50" y2="703.80" stroke="#111" stroke-width="1.2" stroke-linecap="butt"/>
<circle cx="724.30" cy="707.00" r="2.0" fill="#111"/>
<circle cx="794.10" cy="707.00" r="2.0" fill="#111"/>
<circle cx="735.60" cy="703.70" r="1.75" fill="#111"/>
<circle cx="782.50" cy="703.70" r="1.75" fill="#111"/>
<line x1="735.60" y1="703.80" x2="735.60" y2="734.20" stroke="#666" stroke-width="1.0" stroke-linecap="butt"/>
<polygon points="735.60,706.20 734.00,710.70 737.20,710.70" fill="#111"/>
<circle cx="735.60" cy="726.40" r="2.0" fill="#111"/>
<polyline points="732.00,730.80 735.60,734.40 739.20,730.80" stroke="#222" stroke-width="1.1" fill="none"/>
<path d="M731.40,736.90 Q735.60,741.70 739.80,736.90" stroke="#555" stroke-width="1.1" fill="none"/>
<line x1="782.50" y1="703.80" x2="782.50" y2="734.20" stroke="#666" stroke-width="1.0" stroke-linecap="butt"/>
<polygon points="782.50,706.20 780.90,710.70 784.10,710.70" fill="#111"/>
<circle cx="782.50" cy="726.40" r="2.0" fill="#111"/>
<polyline points="778.90,730.80 782.50,734.40 786.10,730.80" stroke="#222" stroke-width="1.1" fill="none"/>
<path d="M778.30,736.90 Q782.50,741.70 786.70,736.90" stroke="#555" stroke-width="1.1" fill="none"/>
<line x1="735.60" y1="717.70" x2="782.50" y2="717.70" stroke="#222" stroke-width="1.2" stroke-linecap="butt" stroke-dasharray="6 3.4"/>
<text x="743.10" y="727.05" text-anchor="start" font-size="7" fill="#3c3c3c">UP</text>
<text x="776.20" y="728.05" text-anchor="end" font-size="7" fill="#3c3c3c">DN</text>
<line x1="735.60" y1="739.20" x2="735.60" y2="786.40" stroke="#c4c4c4" stroke-width="1.7" stroke-linecap="butt"/>
<text x="729.30" y="746.05" text-anchor="end" font-size="7" fill="#3c3c3c">1</text>
<text x="729.10" y="760.85" text-anchor="end" font-size="7" fill="#3c3c3c">GRY</text>
<line x1="782.50" y1="739.20" x2="782.50" y2="786.40" stroke="#0a8a0a" stroke-width="1.7" stroke-linecap="butt"/>
<text x="776.20" y="746.05" text-anchor="end" font-size="7" fill="#3c3c3c">5</text>
<text x="776.00" y="760.85" text-anchor="end" font-size="7" fill="#3c3c3c">DK GRN</text>
<text x="812.20" y="644.95" text-anchor="start" font-size="7" fill="#3c3c3c">RIGHT</text>
<text x="812.20" y="653.15" text-anchor="start" font-size="7" fill="#3c3c3c">REAR</text>
<text x="812.20" y="661.95" text-anchor="start" font-size="7" fill="#3c3c3c">WINDOW</text>
<text x="812.20" y="670.05" text-anchor="start" font-size="7" fill="#3c3c3c">SWITCH</text>
</svg>
</body></html>
